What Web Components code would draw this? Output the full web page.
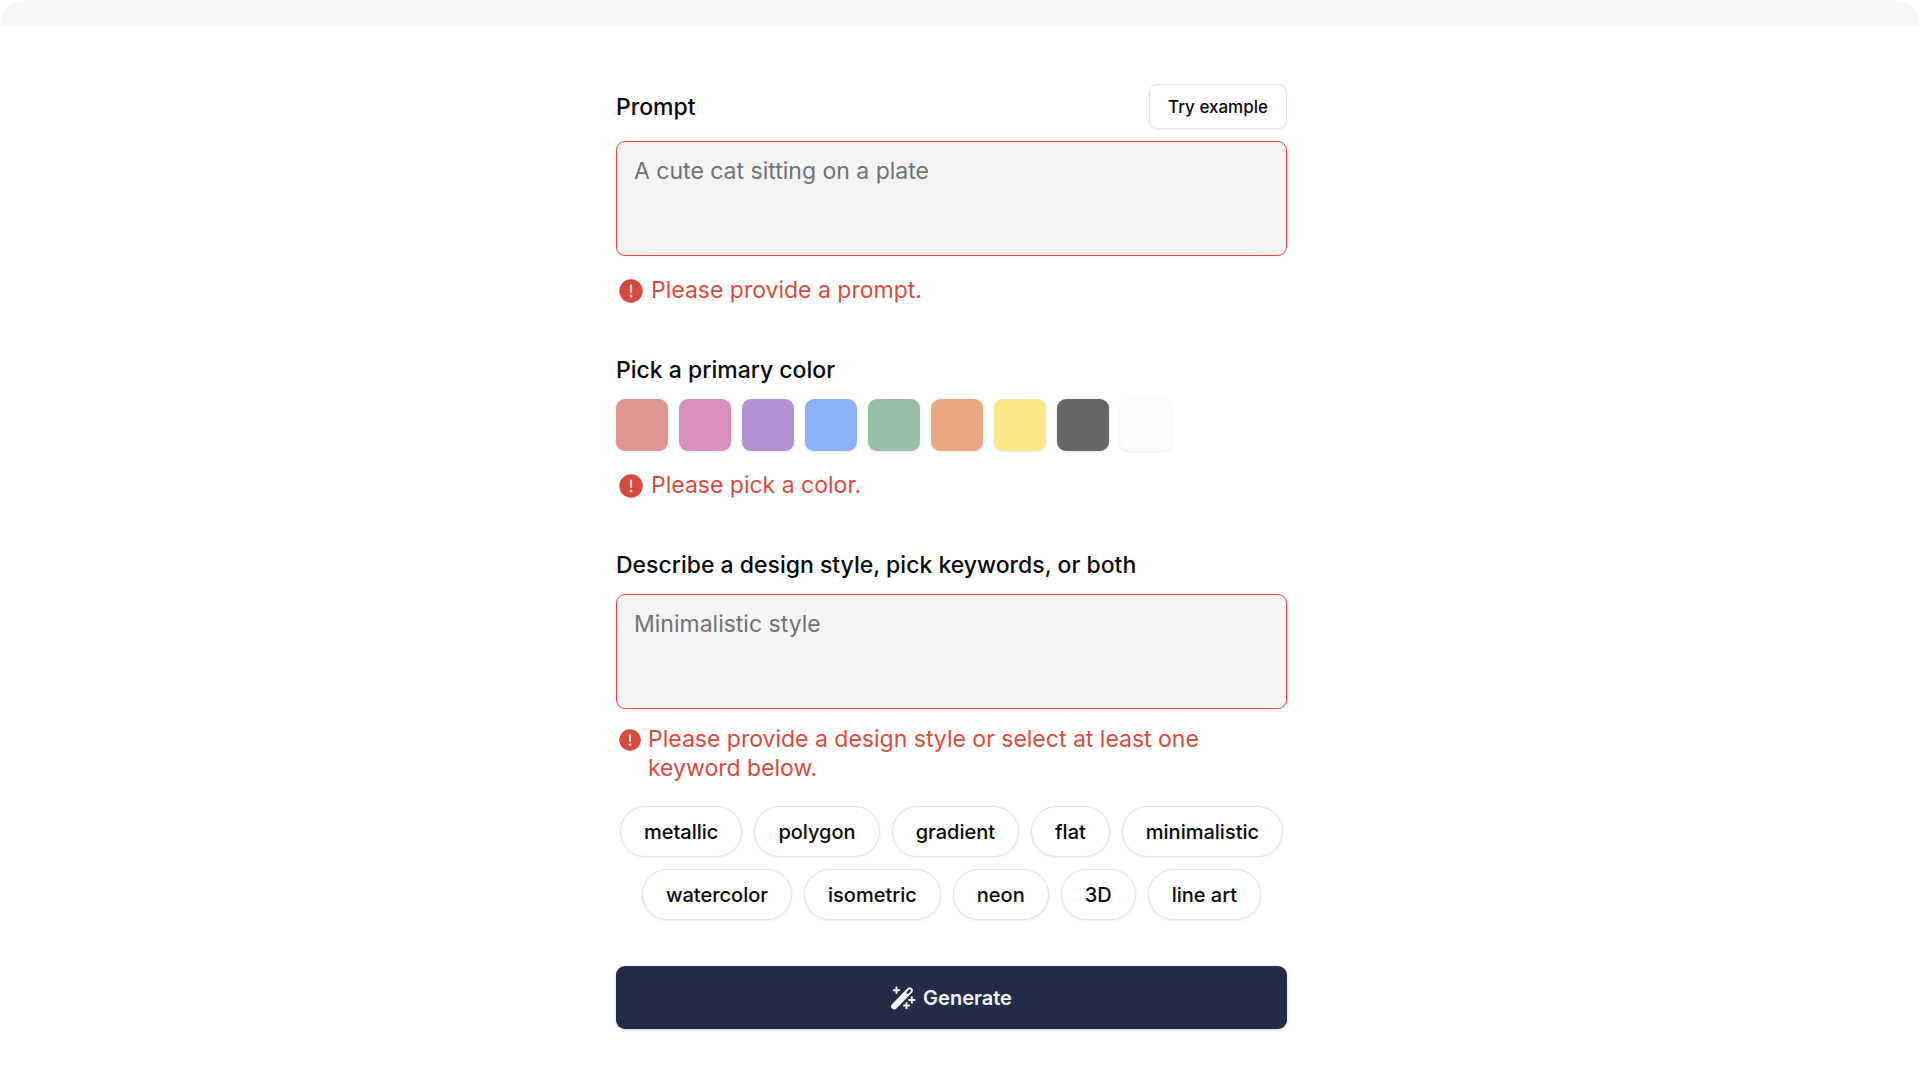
<!DOCTYPE html>
<html lang="en">
<head>
<meta charset="utf-8">
<title>Icon generator</title>
<style>
  body {
    margin: 0;
    background: #fff;
    color: #09090b;
    font-family: Inter, "Liberation Sans", sans-serif;
    -webkit-font-smoothing: antialiased;
  }
</style>
</head>
<body>
<generator-page>
  <generator-form></generator-form>
</generator-page>

<script>
const define = (name, html, setup) => {
  const template = document.createElement('template');
  template.innerHTML = html;
  customElements.define(name, class extends HTMLElement {
    constructor() {
      super();
      this.attachShadow({ mode: 'open' }).append(template.content.cloneNode(true));
    }
    connectedCallback() {
      if (setup) setup(this, this.shadowRoot);
    }
  });
};

define('generator-page', `
  <style>
    :host { display: block; }
    header { height: 26px; background: #f7f7f7; border-radius: 27px 27px 0 0; }
    main { display: flex; justify-content: center; padding: 58px 17px 50px 0; }
  </style>
  <header></header>
  <main><slot></slot></main>
`);

define('error-message', `
  <style>
    :host {
      display: flex;
      gap: 8px;
      padding: 0 3px;
      color: #da4b40;
      font-size: 23px;
      line-height: 29px;
    }
    svg { flex: none; width: 24px; height: 24px; margin-top: 3px; }
    :host([compact]) { gap: 7px; }
    :host([compact]) svg { width: 22px; height: 22px; margin-top: 4px; }
  </style>
  <svg viewBox="0 0 24 24" aria-hidden="true">
    <circle cx="12" cy="12" r="11.7" fill="#d64a40"/>
    <path d="M12 6.700v6.300" stroke="#f8dedb" stroke-width="2.200" stroke-linecap="round"/>
    <circle cx="12" cy="17" r="1.500" fill="#f8dedb"/>
  </svg>
  <span role="alert"><slot></slot></span>
`);

define('text-field', `
  <style>
    :host { display: block; }
    .head { display: flex; align-items: center; justify-content: space-between; margin-bottom: 12px; }
    label { font-size: 23px; font-weight: 500; line-height: 34px; }
    textarea {
      display: block;
      box-sizing: border-box;
      width: 100%;
      height: 115px;
      padding: 12px 17px;
      border: 1px solid #dc4c40;
      border-radius: 9px;
      background: #f4f4f4;
      box-shadow: 0 1px 3px rgba(0, 0, 0, .06);
      color: inherit;
      font: 400 23px/34px Inter, "Liberation Sans", sans-serif;
      resize: none;
      outline: none;
    }
    textarea::placeholder { color: #71717a; opacity: 1; }
  </style>
  <div class="head"><label for="field"></label><slot name="action"></slot></div>
  <textarea id="field"></textarea>
`, (host, root) => {
  root.querySelector('label').textContent = host.getAttribute('label');
  root.querySelector('textarea').placeholder = host.getAttribute('placeholder');
});

define('outline-button', `
  <style>
    :host { display: block; }
    button {
      display: block;
      box-sizing: border-box;
      height: 45px;
      padding: 0 18px;
      border: 1px solid #e2e2e4;
      border-radius: 9px;
      background: #fff;
      box-shadow: 0 1px 3px rgba(0, 0, 0, .07);
      color: inherit;
      font: 500 17px/24px Inter, "Liberation Sans", sans-serif;
    }
  </style>
  <button type="button"><slot></slot></button>
`);

define('keyword-chip', `
  <style>
    :host { display: block; }
    button {
      display: block;
      box-sizing: border-box;
      height: 51px;
      padding: 0 23px;
      border: 1px solid #e2e2e4;
      border-radius: 26px;
      background: #fff;
      box-shadow: 0 1px 3px rgba(0, 0, 0, .07);
      color: inherit;
      font: 500 20px/28px Inter, "Liberation Sans", sans-serif;
    }
  </style>
  <button type="button" aria-pressed="false"><slot></slot></button>
`);

define('color-swatch', `
  <style>
    :host { display: block; }
    button {
      display: block;
      width: 52px;
      height: 52px;
      padding: 0;
      border: 0;
      border-radius: 9px;
      background: var(--swatch);
      box-shadow: 0 1px 3px rgba(0, 0, 0, .1);
    }
  </style>
  <button type="button"></button>
`, (host, root) => {
  const button = root.querySelector('button');
  button.style.setProperty('--swatch', host.getAttribute('color'));
  button.setAttribute('aria-label', host.getAttribute('name'));
});

define('generate-button', `
  <style>
    :host { display: block; }
    button {
      display: flex;
      align-items: center;
      justify-content: center;
      gap: 8px;
      box-sizing: border-box;
      width: 100%;
      height: 63px;
      padding: 0;
      border: 0;
      border-radius: 9px;
      background: #222d49;
      box-shadow: 0 1px 3px rgba(0, 0, 0, .2);
      color: #f7f7f7;
      font: 600 20px/28px Inter, "Liberation Sans", sans-serif;
    }
    svg { width: 24px; height: 24px; overflow: visible; }
  </style>
  <button type="submit">
    <svg viewBox="0 0 24 24" aria-hidden="true">
      <path d="M3.200 20.300 18.700 4.500" stroke="#f4f3f2" stroke-width="6.200" stroke-linecap="round"/>
      <path d="M16.700 6.700l2-2" stroke="#222d49" stroke-width="2.600" stroke-linecap="round"/>
      <path d="M5.500 1.600v5.400M2.800 4.300h5.400M20.800 11.300v5.400M18.100 14h5.400M15.500 17v5.200M12.900 19.600h5.200" stroke="#f4f3f2" stroke-width="2" stroke-linecap="round"/>
    </svg>
    <span><slot></slot></span>
  </button>
`);

define('generator-form', `
  <style>
    :host { display: block; flex: 0 1 671px; min-width: 0; }
    form { display: flex; flex-direction: column; gap: 48px; }
    .group { display: flex; flex-direction: column; }
    .group > error-message { margin-top: 20px; }
    .group > error-message[compact] { margin-top: 16px; padding-right: 60px; }
    fieldset { margin: 0; padding: 0; border: 0; min-width: 0; }
    legend { padding: 0; margin-bottom: 12px; font-size: 23px; font-weight: 500; line-height: 34px; }
    .swatches { display: flex; flex-wrap: wrap; gap: 11px; }
    .chips { display: flex; flex-wrap: wrap; gap: 12px; justify-content: center; margin-top: 23px; }
    generate-button { margin-top: -2px; }
  </style>
  <form novalidate>
    <div class="group">
      <text-field label="Prompt" placeholder="A cute cat sitting on a plate">
        <outline-button slot="action">Try example</outline-button>
      </text-field>
      <error-message>Please provide a prompt.</error-message>
    </div>
    <fieldset class="group">
      <legend>Pick a primary color</legend>
      <div class="swatches">
        <color-swatch name="Red" color="#e09590"></color-swatch>
        <color-swatch name="Pink" color="#d78fbd"></color-swatch>
        <color-swatch name="Purple" color="#b092d5"></color-swatch>
        <color-swatch name="Blue" color="#8bb2fb"></color-swatch>
        <color-swatch name="Green" color="#95c0a2"></color-swatch>
        <color-swatch name="Orange" color="#eba780"></color-swatch>
        <color-swatch name="Yellow" color="#fae886"></color-swatch>
        <color-swatch name="Black" color="#666666"></color-swatch>
        <color-swatch name="White" color="#fbfbfb"></color-swatch>
      </div>
      <error-message>Please pick a color.</error-message>
    </fieldset>
    <div class="group">
      <text-field label="Describe a design style, pick keywords, or both" placeholder="Minimalistic style"></text-field>
      <error-message compact>Please provide a design style or select at least one keyword below.</error-message>
      <div class="chips">
        <keyword-chip>metallic</keyword-chip>
        <keyword-chip>polygon</keyword-chip>
        <keyword-chip>gradient</keyword-chip>
        <keyword-chip>flat</keyword-chip>
        <keyword-chip>minimalistic</keyword-chip>
        <keyword-chip>watercolor</keyword-chip>
        <keyword-chip>isometric</keyword-chip>
        <keyword-chip>neon</keyword-chip>
        <keyword-chip>3D</keyword-chip>
        <keyword-chip>line art</keyword-chip>
      </div>
    </div>
    <generate-button>Generate</generate-button>
  </form>
`);
</script>
</body>
</html>
